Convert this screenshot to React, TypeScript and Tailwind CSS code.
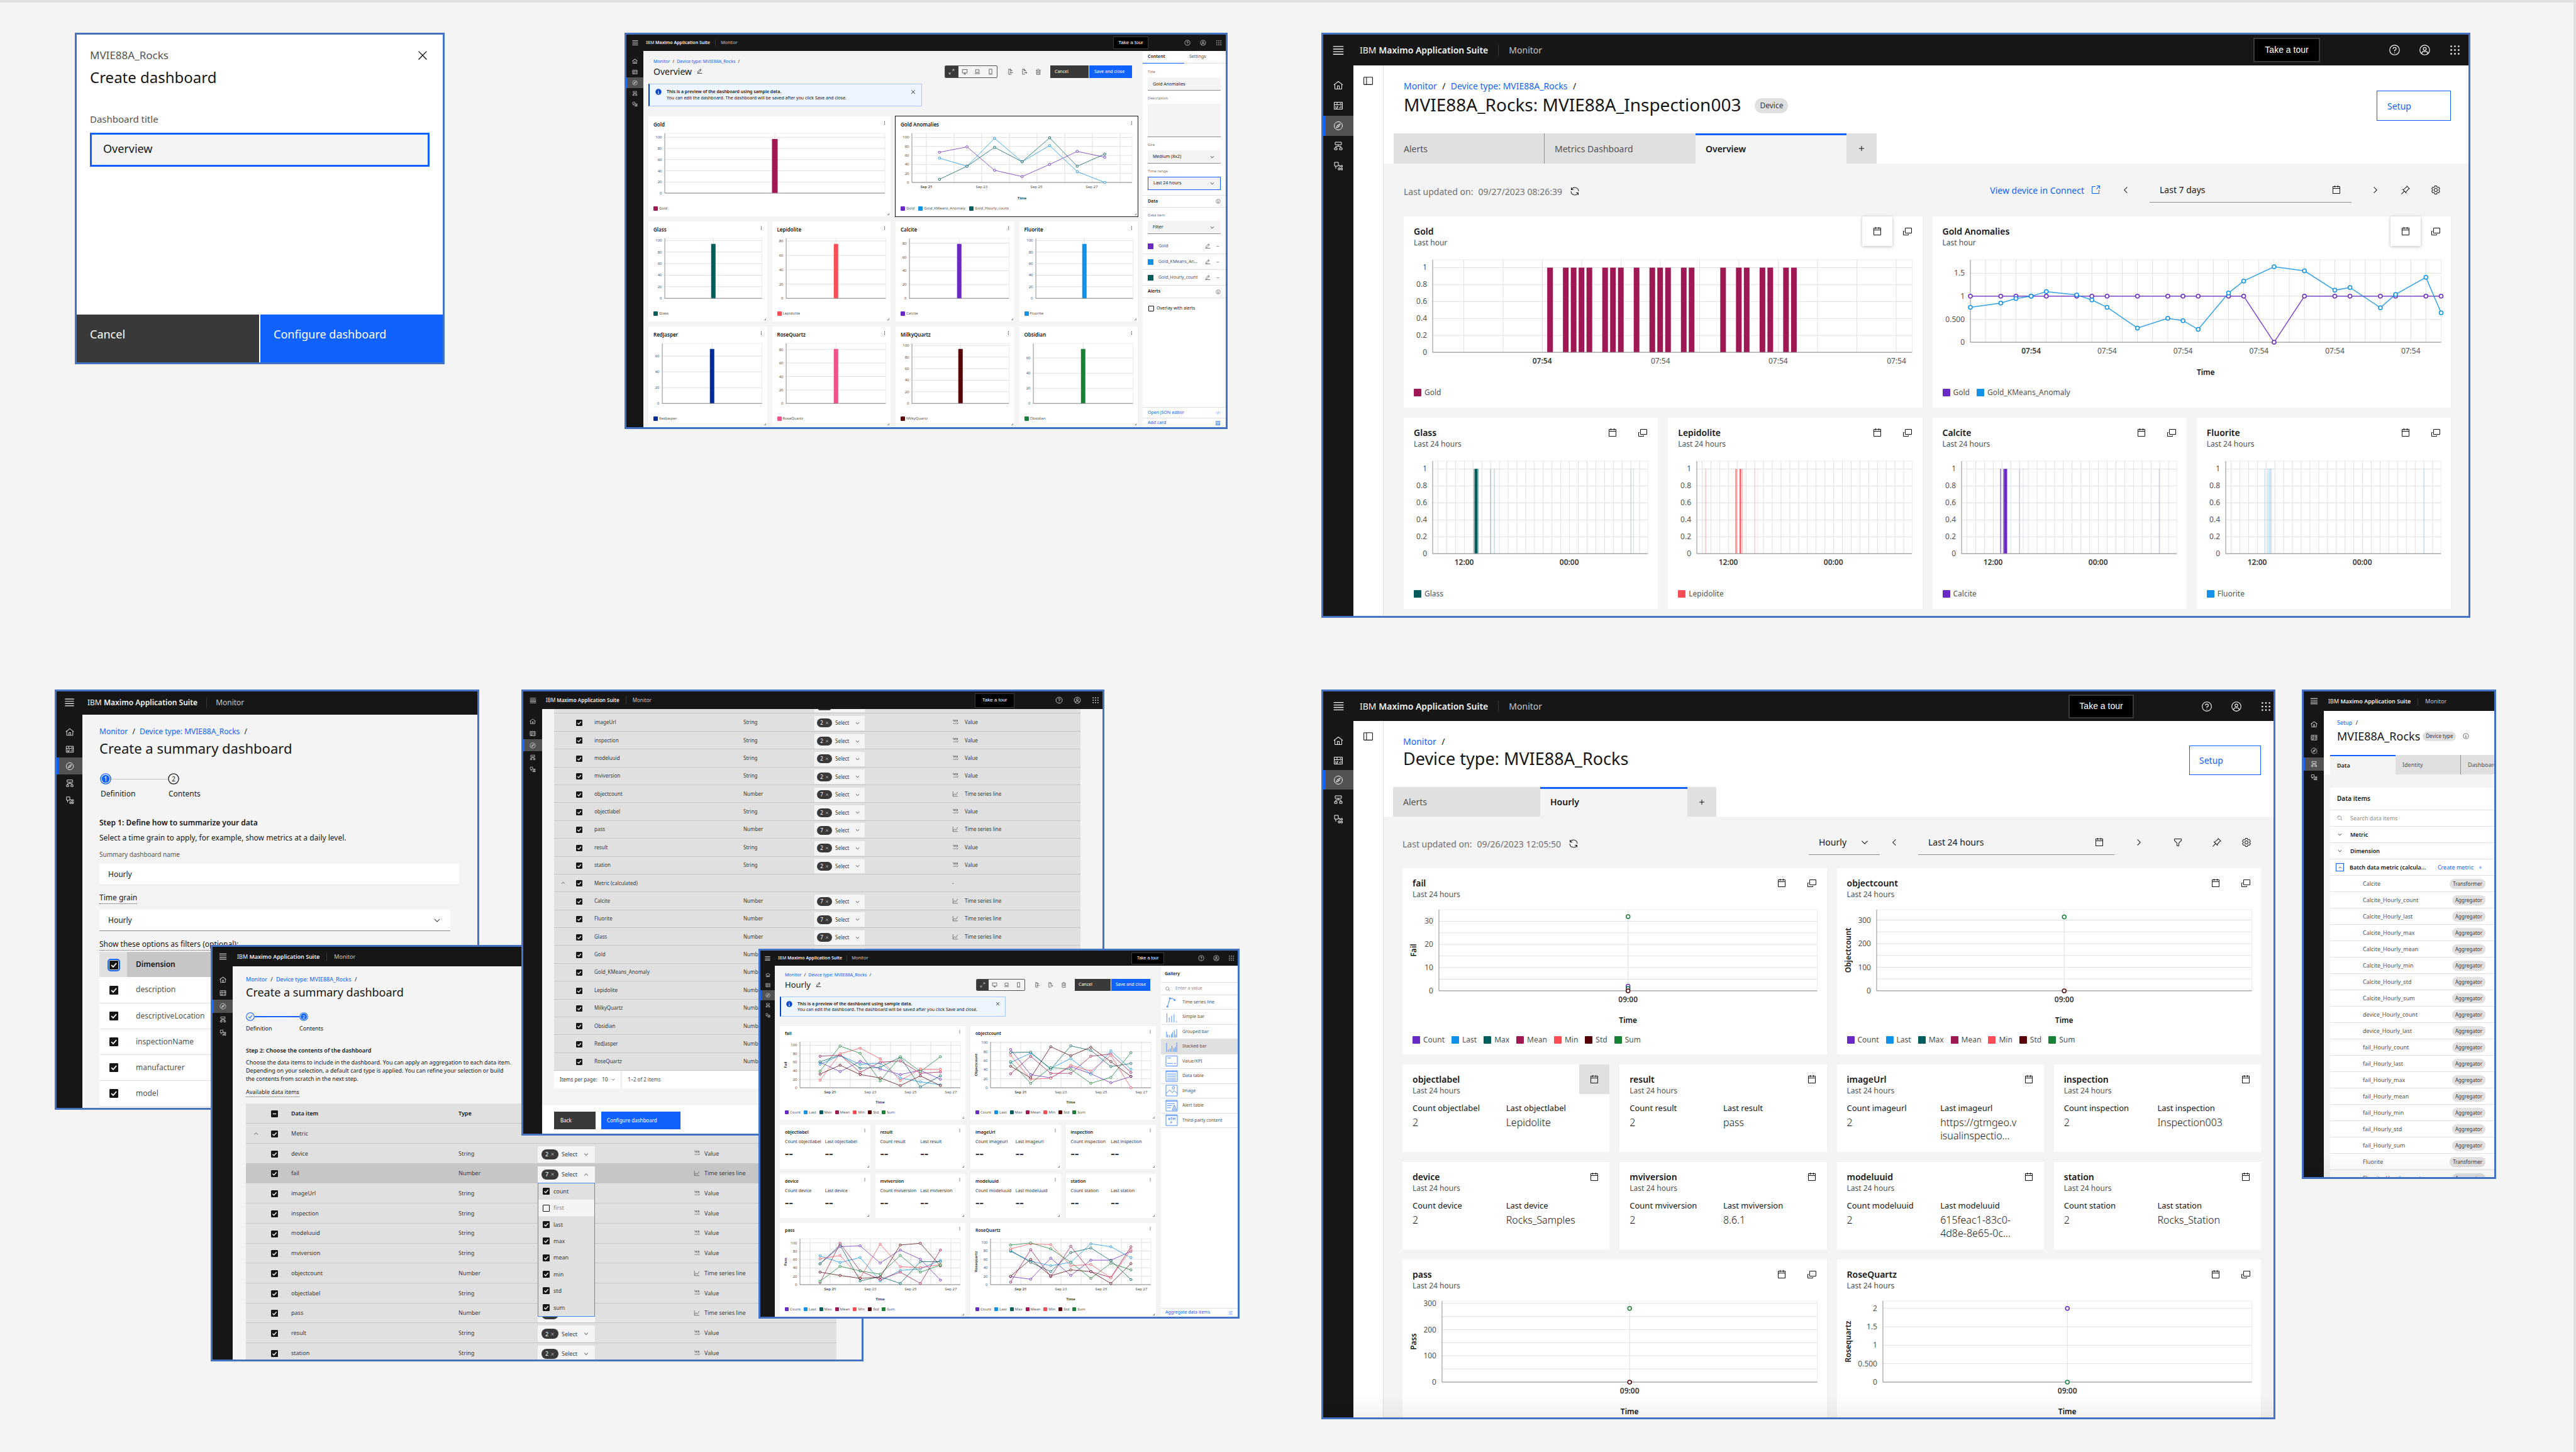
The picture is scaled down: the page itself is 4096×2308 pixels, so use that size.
import React from "react";

/* ------------------------------------------------------------------ */
/* Icons                                                               */
/* ------------------------------------------------------------------ */

const PATHS = {
  menu: "M4 6H28V8H4zM4 24H28V26H4zM4 12H28V14H4zM4 18H28V20H4z",
  home: "M16.61 2.21a1.01 1.01 0 0 0-1.24 0L1 13.42l1.24 1.57L4 13.62V26a2 2 0 0 0 2 2H26a2 2 0 0 0 2-2V13.63L29.76 15 31 13.43ZM18 26H14V18h4Zm2 0V18a2 2 0 0 0-2-2H14a2 2 0 0 0-2 2v8H6V12.06l10-7.79 10 7.8V26Z",
  calendar:
    "M26,4h-4V2h-2v2h-8V2h-2v2H6C4.9,4,4,4.9,4,6v20c0,1.1,0.9,2,2,2h20c1.1,0,2-0.9,2-2V6C28,4.9,27.1,4,26,4z M26,26H6V12h20V26z M26,10H6V6h4v2h2V6h8v2h2V6h4V10z",
  popup:
    "M28,4H10A2,2,0,0,0,8,6V20a2,2,0,0,0,2,2H28a2,2,0,0,0,2-2V6A2,2,0,0,0,28,4Zm0,16H10V6H28ZM18,26H4V16H6V14H4a2,2,0,0,0-2,2V26a2,2,0,0,0,2,2H18a2,2,0,0,0,2-2V24H18Z",
  close:
    "M17.41 16L26 7.41 24.59 6 16 14.59 7.41 6 6 7.41 14.59 16 6 24.59 7.41 26 16 17.41 24.59 26 26 24.59z",
  down: "M16 22L6 12 7.4 10.6 16 19.2 24.6 10.6 26 12z",
  up: "M16 10L26 20 24.6 21.4 16 12.8 7.4 21.4 6 20z",
  right: "M22 16L12 26 10.6 24.6 19.2 16 10.6 7.4 12 6z",
  left: "M10 16L20 6 21.4 7.4 12.8 16 21.4 24.6 20 26z",
  add: "M17 15V8H15V15H8V17H15V24H17V17H24V15z",
  minus: "M8 15H24V17H8z",
  switcher:
    "M14 4h4v4h-4zM4 4h4v4H4zM24 4h4v4h-4zM14 14h4v4h-4zM4 14h4v4H4zM24 14h4v4h-4zM14 24h4v4h-4zM4 24h4v4H4zM24 24h4v4h-4z",
  renew:
    "M12 10H6.78A11 11 0 0127 16h2A13 13 0 006 7.68V4H4v8h8zM20 22h5.22A11 11 0 015 16H3a13 13 0 0023 8.32V28h2V20H20z",
  launch:
    "M26,28H6a2,2,0,0,1-2-2V6A2,2,0,0,1,6,4H16V6H6V26H26V16h2V26A2,2,0,0,1,26,28ZM20 2V4H26.59L18 12.59 19.41 14 28 5.41V12H30V2z",
  pin: "M28.59,13.31,30,11.9,20,2,18.69,3.42l1.18,1.18L8.38,14.32,6.66,12.61,5.25,14l5.66,5.68L2,28.58,3.41,30l8.91-8.91L18,26.75l1.39-1.41L17.68,23.62l9.72-11.49ZM16.26,22.2,9.8,15.74,21.29,6.02,25.98,10.71Z",
  settings:
    "M27,16.76c0-.25,0-.5,0-.76s0-.51,0-.77l1.92-1.68A2,2,0,0,0,29.3,11L26.94,7a2,2,0,0,0-1.73-1,2,2,0,0,0-.64.1l-2.43.82a11.35,11.35,0,0,0-1.31-.75l-.51-2.52a2,2,0,0,0-2-1.61H13.64a2,2,0,0,0-2,1.61l-.51,2.52a11.48,11.48,0,0,0-1.32.75L7.43,6.06A2,2,0,0,0,6.79,6,2,2,0,0,0,5.06,7L2.7,11a2,2,0,0,0,.41,2.51L5,15.24c0,.25,0,.5,0,.76s0,.51,0,.77L3.11,18.45A2,2,0,0,0,2.7,21L5.06,25a2,2,0,0,0,1.73,1,2,2,0,0,0,.64-.1l2.43-.82a11.35,11.35,0,0,0,1.31.75l.51,2.52a2,2,0,0,0,2,1.61h4.72a2,2,0,0,0,2-1.61l.51-2.52a11.48,11.48,0,0,0,1.32-.75l2.42.82a2,2,0,0,0,.64.1,2,2,0,0,0,1.73-1L29.3,21a2,2,0,0,0-.41-2.51ZM25.21,24l-3.43-1.16a8.86,8.86,0,0,1-2.71,1.57L18.36,28H13.64l-.71-3.55a9.36,9.36,0,0,1-2.7-1.57L6.79,24,4.43,20l2.72-2.4a8.9,8.9,0,0,1,0-3.13L4.43,12,6.79,8l3.43,1.16a8.86,8.86,0,0,1,2.71-1.57L13.64,4h4.72l.71,3.55a9.36,9.36,0,0,1,2.7,1.57L25.21,8,27.57,12l-2.72,2.4a8.9,8.9,0,0,1,0,3.13L27.57,20ZM16,22a6,6,0,1,1,6-6A5.94,5.94,0,0,1,16,22Zm0-10a3.91,3.91,0,0,0-4,4,3.91,3.91,0,0,0,4,4,3.91,3.91,0,0,0,4-4A3.91,3.91,0,0,0,16,12Z",
  filter:
    "M18,28H14a2,2,0,0,1-2-2V18.41L4.59,11A2,2,0,0,1,4,9.59V6A2,2,0,0,1,6,4H26a2,2,0,0,1,2,2V9.59A2,2,0,0,1,27.41,11L20,18.41V26A2,2,0,0,1,18,28ZM6,6V9.59l8,8V26h4V17.59l8-8V6Z",
  edit: "M2 26H30V28H2zM25.4 9c.8-.8.8-2 0-2.8l-3.6-3.6c-.8-.8-2-.8-2.8 0l-15 15V24h6.4L25.4 9zM20.4 4L24 7.6l-3 3L17.4 7 20.4 4zM6 22v-3.6l10-10 3.6 3.6-10 10H6z",
  trash:
    "M12 12H14V24H12zM18 12H20V24H18zM4 6V8H6V28a2 2 0 002 2H24a2 2 0 002-2V8h2V6zM8 28V8H24V28zM12 2H20V4H12z",
  search:
    "M29,27.59l-7.55-7.55a11.02,11.02,0,1,0-1.41,1.41L27.59,29ZM4,13a9,9,0,1,1,9,9A9.01,9.01,0,0,1,4,13Z",
  sidebar: "M28,4H4A2,2,0,0,0,2,6V26a2,2,0,0,0,2,2H28a2,2,0,0,0,2-2V6A2,2,0,0,0,28,4ZM4,6H10V26H4ZM28,26H12V6H28Z",
  overflow: "M14 6h4v4h-4zM14 14h4v4h-4zM14 22h4v4h-4z",
  grid: "M4 4h6v6H4zM13 4h6v6h-6zM22 4h6v6h-6zM4 13h6v6H4zM13 13h6v6h-6zM22 13h6v6h-6zM4 22h6v6H4zM13 22h6v6h-6zM22 22h6v6h-6z",
};

const LINES = {
  help: "M3 16a13 13 0 1 0 26 0a13 13 0 1 0 -26 0M12 13a4 4 0 0 1 4-4h.5a3.5 3.5 0 0 1 0 7.5H16V19.5M16 22.2V24.6",
  user: "M3 16a13 13 0 1 0 26 0a13 13 0 1 0 -26 0M12 13a4 4 0 1 0 8 0a4 4 0 1 0 -8 0M8.5 26v-2a4 4 0 0 1 4-4h7a4 4 0 0 1 4 4v2",
  compass: "M3 16a13 13 0 1 0 26 0a13 13 0 1 0 -26 0M22.5 9.5L13.5 14L9.5 22.5L18.5 18ZM14 14L18 18",
  dashboard: "M3 5H29V27H3ZM3 13H29M12 5V13M21 9H26M8 17V24M8 24L13 24V18H16M20 24V20M24.5 24V16",
  flow: "M6 4H26V12H6ZM16 12V17M8 22V17H24V22M4 22H12V28H4ZM20 22H28V28H20Z",
  shapes: "M4 4H16V16H4ZM8 16V24M16 22H21V28H16ZM24 14H29V19H24ZM24 23H29V28H24ZM16 14H21V19",
  maximize: "M20 4H28V12M28 4L19 13M12 28H4V20M4 28L13 19",
  screen: "M4 5H28V22H4ZM16 22V28M10 28H22",
  laptop: "M7 6H25V20H7ZM3 26H29",
  mobile: "M9 3H23V29H9ZM14 25H18",
  import: "M22 12V10L15 3H6V29H20M14 3V11H22M28 20H14M18 15L13 20L18 25",
  export: "M22 12V10L15 3H6V29H18M14 3V11H22M14 21H28M23 16L28 21L23 26",
  info: "M3 16a13 13 0 1 0 26 0a13 13 0 1 0 -26 0M13 22H19M16 22V14H13.5M16 8.5V11",
  line: "M4 3V28H29M5 24L12 15L19 21L28 6",
  value: "M4 4H7V12M12 5H17V8H12V12H17M21 5H27V12H21M22 8.5H27M5 24C9 16 11 28 16 23S22 18 22 18M22 24H27L30 18",
  code: "M9 10L3 16L9 22M23 10L29 16L23 22M19 7L13 25",
  tune: "M4 7H14M20 7H28M4 16H20M4 25H12M18 25H28M17 4V10M23 13V19M15 22V28",
};

type IconName = keyof typeof PATHS | keyof typeof LINES;

function Icon({ name, className }: { name: IconName; className: string }) {
  const isLine = name in LINES;
  return (
    <svg viewBox="0 0 32 32" aria-hidden="true" className={`shrink-0 ${className}`}>
      {isLine ? (
        <path d={LINES[name as keyof typeof LINES]} fill="none" stroke="currentColor" strokeWidth="2" />
      ) : (
        <path d={PATHS[name as keyof typeof PATHS]} fill="currentColor" fillRule="evenodd" />
      )}
    </svg>
  );
}

/* ------------------------------------------------------------------ */
/* Colours                                                             */
/* ------------------------------------------------------------------ */

const C = {
  purple: "#6929c4",
  blue: "#1192e8",
  teal: "#005d5d",
  magenta: "#9f1853",
  red: "#fa4d56",
  maroon: "#570408",
  green: "#198038",
  navy: "#002d9c",
  pink: "#ee538b",
};

const AGG: [string, string][] = [
  ["Count", C.purple],
  ["Last", C.blue],
  ["Max", C.teal],
  ["Mean", C.magenta],
  ["Min", C.red],
  ["Std", C.maroon],
  ["Sum", C.green],
];

/* ------------------------------------------------------------------ */
/* Charts                                                              */
/* ------------------------------------------------------------------ */

interface ChartProps {
  w: number;
  h: number;
  plot: [number, number, number, number];
  max: number;
  ticks: number[];
  labelled?: (v: number) => string | null;
  vlines?: number[];
  xLabels?: [number, string, boolean][];
  xLabelY?: number;
  titleY?: number;
  yTitle?: string;
  font: number;
  stroke?: number;
  r?: number;
  series?: { color: string; pts: [number, number][] }[];
  bars?: { x: number; w: number; v: number; color: string; opacity?: number }[];
}

function Chart(p: ChartProps) {
  const [x0, y0, x1, y1] = p.plot;
  const y = (v: number) => y1 - (v / p.max) * (y1 - y0);
  const label = p.labelled ?? ((v: number) => String(v));
  const mid = (y0 + y1) / 2;
  return (
    <svg viewBox={`0 0 ${p.w} ${p.h}`} className="block w-full font-['Noto_Sans',sans-serif]" role="img">
      <g stroke="#e0e0e0" strokeWidth="1" fill="none">
        <path d={`M${x0} ${y0}H${x1}V${y1}`} stroke="#ececec" />
        {p.ticks.map((t) => (
          <line key={t} x1={x0} x2={x1} y1={y(t)} y2={y(t)} />
        ))}
        {(p.vlines ?? []).map((v) => (
          <line key={v} x1={v} x2={v} y1={y0} y2={y1} />
        ))}
      </g>
      {(p.bars ?? []).map((b, i) => (
        <rect key={i} x={b.x - b.w / 2} y={y(b.v)} width={b.w} height={y1 - y(b.v)} fill={b.color} opacity={b.opacity ?? 1} />
      ))}
      <path d={`M${x0} ${y0}V${y1}H${x1}`} fill="none" stroke="#8d8d8d" strokeWidth="1" />
      {p.ticks.map((t) => {
        const text = label(t);
        return text === null ? null : (
          <text key={t} x={x0 - p.font * 0.75} y={y(t) + p.font * 0.34} textAnchor="end" fontSize={p.font} fill="#525252">
            {text}
          </text>
        );
      })}
      {(p.series ?? []).map((s, i) => (
        <g key={i}>
          <polyline
            points={s.pts.map(([x, v]) => `${x},${y(v)}`).join(" ")}
            fill="none"
            stroke={s.color}
            strokeOpacity="0.85"
            strokeWidth={p.stroke ?? 1}
          />
          {s.pts.map(([x, v], k) => (
            <circle key={k} cx={x} cy={y(v)} r={p.r ?? 2} fill="#fff" stroke={s.color} strokeWidth={p.stroke ?? 1} />
          ))}
        </g>
      ))}
      {(p.xLabels ?? []).map(([x, t, bold]) => (
        <text
          key={x}
          x={x}
          y={(p.xLabelY ?? 0) + p.font * 0.34}
          textAnchor="middle"
          fontSize={p.font}
          fontWeight={bold ? 600 : 400}
          fill={bold ? "#393939" : "#525252"}
        >
          {t}
        </text>
      ))}
      {p.titleY !== undefined && (
        <text x={(x0 + x1) / 2} y={p.titleY + p.font * 0.34} textAnchor="middle" fontSize={p.font} fontWeight="600" fill="#161616">
          Time
        </text>
      )}
      {p.yTitle && (
        <text
          x={p.font * 1.8}
          y={mid}
          transform={`rotate(-90 ${p.font * 1.8} ${mid})`}
          textAnchor="middle"
          fontSize={p.font}
          fontWeight="600"
          fill="#161616"
        >
          {p.yTitle}
        </text>
      )}
    </svg>
  );
}

const LEGEND = {
  lg: { row: "h-6 gap-[11px] px-4 text-[12px]", item: "gap-[5px]", box: "size-3" },
  md: { row: "h-5 gap-[6px] px-2 text-[6px]", item: "gap-[2px]", box: "size-[7px]" },
  sm: { row: "h-[15px] gap-[5px] px-2 text-[6px]", item: "gap-[2px]", box: "size-[6px]" },
};

function Legend({ items, size }: { items: [string, string][]; size: keyof typeof LEGEND }) {
  const s = LEGEND[size];
  return (
    <ul className={`flex items-center text-[#525252] ${s.row}`}>
      {items.map(([name, color]) => (
        <li key={name} className={`flex items-center leading-none ${s.item}`}>
          <span className={`rounded-[1px] ${s.box}`} style={{ backgroundColor: color }} />
          {name}
        </li>
      ))}
    </ul>
  );
}

/* ------------------------------------------------------------------ */
/* Application chrome                                                  */
/* ------------------------------------------------------------------ */

const CHROME = {
  full: {
    bar: "h-[49px] text-[14px]",
    menu: "w-12",
    menuIcon: "size-[22px]",
    brand: "pl-[10px]",
    rule: "mx-4 h-[18px]",
    tour: "mr-[109px] h-[39px] w-[106px] border-2 text-[14px]",
    tools: "gap-[29px] pr-3",
    tool: "size-[19px]",
    nav: "w-12 pt-4",
    item: "h-8 border-l-4 pr-1",
    itemIcon: "size-4",
  },
  wide: {
    bar: "h-[47px] text-[14px]",
    menu: "w-12",
    menuIcon: "size-[21px]",
    brand: "pl-[10px]",
    rule: "mx-4 h-[18px]",
    tour: "mr-[107px] h-[38px] w-[104px] border-2 text-[14px]",
    tools: "gap-[29px] pr-[3px]",
    tool: "size-[18px]",
    nav: "w-12 pt-4",
    item: "h-[31px] border-l-4 pr-1",
    itemIcon: "size-4",
  },
  large: {
    bar: "h-[37px] pb-[2px] text-[12px]",
    menu: "w-[41px]",
    menuIcon: "size-[19px]",
    brand: "pl-2",
    rule: "mx-[14px] h-[16px]",
    tour: "",
    tools: "",
    tool: "",
    nav: "w-[41px] pt-[14px]",
    item: "h-[27px] border-l-[3px] pr-[3px]",
    itemIcon: "size-[14px]",
  },
  medium: {
    bar: "h-[31px] text-[9px]",
    menu: "w-8",
    menuIcon: "size-[15px]",
    brand: "pl-[7px]",
    rule: "mx-[11px] h-3",
    tour: "",
    tools: "",
    tool: "",
    nav: "w-8 pt-[11px]",
    item: "h-[21px] border-l-2 pr-[2px]",
    itemIcon: "size-[11px]",
  },
  compact: {
    bar: "h-7 text-[8px]",
    menu: "w-[30px]",
    menuIcon: "size-[13px]",
    brand: "pl-[6px]",
    rule: "mx-[10px] h-3",
    tour: "mr-[65px] h-[23px] w-[63px] border text-[8px]",
    tools: "gap-[17px] pr-[5px]",
    tool: "size-[12px]",
    nav: "w-[30px] pt-[10px]",
    item: "h-[19px] border-l-2 pr-[2px]",
    itemIcon: "size-[10px]",
  },
  small: {
    bar: "h-[26px] text-[7px]",
    menu: "w-[27px]",
    menuIcon: "size-[12px]",
    brand: "pl-[4px]",
    rule: "mx-[8px] h-[10px]",
    tour: "mr-[57px] h-5 w-[56px] border text-[8px]",
    tools: "gap-[15px] pr-[6px]",
    tool: "size-[10px]",
    nav: "w-[27px] pt-2",
    item: "h-[17px] border-l-2 pr-[2px]",
    itemIcon: "size-[9px]",
  },
  tiny: {
    bar: "h-6 text-[7px]",
    menu: "w-[23px]",
    menuIcon: "size-[11px]",
    brand: "pl-[5px]",
    rule: "mx-[7px] h-[9px]",
    tour: "mr-[54px] h-[19px] w-[52px] border text-[7px]",
    tools: "gap-[14px] pr-[5px]",
    tool: "size-[10px]",
    nav: "w-[23px] pt-[7px]",
    item: "h-4 border-l-2 pr-[2px]",
    itemIcon: "size-[8px]",
  },
};

type ChromeSize = keyof typeof CHROME;

const NAV: [IconName, string][] = [
  ["home", "Home"],
  ["dashboard", "Dashboards"],
  ["compass", "Monitor"],
  ["flow", "Setup"],
  ["shapes", "Applications"],
];

function Shell({
  size,
  tools = true,
  active = 2,
  children,
}: {
  size: ChromeSize;
  tools?: boolean;
  active?: number;
  children: React.ReactNode;
}) {
  const s = CHROME[size];
  return (
    <div className="flex h-full flex-col bg-[#f4f4f4]">
      <header className={`flex shrink-0 items-center whitespace-nowrap bg-[#161616] text-[#f4f4f4] ${s.bar}`}>
        <button aria-label="Open menu" className={`flex shrink-0 justify-center ${s.menu}`}>
          <Icon name="menu" className={s.menuIcon} />
        </button>
        <span className={s.brand}>
          IBM <span className="font-semibold">Maximo Application Suite</span>
        </span>
        <span className={`w-px bg-[#393939] ${s.rule}`} />
        <span className="text-[#c6c6c6]">Monitor</span>
        {tools && (
          <>
            <button className={`ml-auto border-[#393939] bg-black text-white font-['Liberation_Sans',sans-serif] ${s.tour}`}>
              Take a tour
            </button>
            <div className={`flex items-center ${s.tools}`}>
              <button aria-label="Help"><Icon name="help" className={s.tool} /></button>
              <button aria-label="Account"><Icon name="user" className={s.tool} /></button>
              <button aria-label="Switch application"><Icon name="switcher" className={s.tool} /></button>
            </div>
          </>
        )}
      </header>
      <div className="flex min-h-0 flex-1">
        <nav aria-label="Main" className={`flex shrink-0 flex-col bg-[#161616] text-[#f4f4f4] ${s.nav}`}>
          {NAV.map(([icon, label], i) => (
            <a
              key={icon}
              href={`#${icon}`}
              aria-label={label}
              className={`flex items-center justify-center ${s.item} ${
                i === active ? "border-[#0f62fe] bg-[#525252]" : "border-transparent"
              }`}
            >
              <Icon name={icon} className={s.itemIcon} />
            </a>
          ))}
        </nav>
        {children}
      </div>
    </div>
  );
}

function Crumbs({ items, className }: { items: string[]; className: string }) {
  return (
    <nav aria-label="Breadcrumb" className={`flex items-center whitespace-nowrap text-[#161616] ${className}`}>
      {items.map((t) => (
        <React.Fragment key={t}>
          <a href="#crumb" className="text-[#0f62fe]">{t}</a>
          <span className="mx-[0.6em]">/</span>
        </React.Fragment>
      ))}
    </nav>
  );
}

function Tick({ className, label, checked = true, mixed = false }: { className: string; label: string; checked?: boolean; mixed?: boolean }) {
  return (
    <span className={`relative inline-block shrink-0 align-middle ${className}`}>
      <input
        type="checkbox"
        aria-label={label}
        defaultChecked={checked}
        className="block size-full appearance-none rounded-[1px] border border-[#161616] checked:bg-[#161616]"
      />
      {checked && (
        <svg viewBox="0 0 16 16" className="pointer-events-none absolute inset-0 size-full" aria-hidden="true">
          <path d={mixed ? "M4 8H12" : "M3.5 8.2L6.8 11.4L12.6 4.8"} fill="none" stroke="#fff" strokeWidth="2" />
        </svg>
      )}
    </span>
  );
}

/* ------------------------------------------------------------------ */
/* Create dashboard dialog                                             */
/* ------------------------------------------------------------------ */

function CreateDialog() {
  return (
    <form className="flex h-full flex-col bg-white">
      <div className="flex-1 px-[21px] pt-[21px]">
        <div className="flex items-center justify-between">
          <p className="text-[17px] leading-6 text-[#525252]">MVIE88A_Rocks</p>
          <button type="button" aria-label="Close">
            <Icon name="close" className="size-[22px]" />
          </button>
        </div>
        <h2 className="mt-[7px] text-[24px] leading-8 text-[#161616]">Create dashboard</h2>
        <label htmlFor="dash-title" className="mt-[38px] block text-[15px] leading-6 text-[#525252]">
          Dashboard title
        </label>
        <input
          id="dash-title"
          defaultValue="Overview"
          className="mt-[10px] block h-[54px] w-full border-[3px] border-[#0f62fe] bg-[#f4f4f4] px-[18px] pb-1 text-[18px] text-[#161616]"
        />
      </div>
      <div className="flex h-[76px] gap-[2px] text-[18px] text-white">
        <button type="button" className="flex flex-1 bg-[#393939] pl-[21px] pt-[19px] leading-6">Cancel</button>
        <button type="button" className="flex flex-1 bg-[#0f62fe] pl-[21px] pt-[19px] leading-6">Configure dashboard</button>
      </div>
    </form>
  );
}

/* ------------------------------------------------------------------ */
/* Dashboard editor (two sizes)                                        */
/* ------------------------------------------------------------------ */

const EDITOR = {
  md: {
    body: "px-2",
    head: "h-[52px] pl-2 pr-[9px]",
    crumbs: "mt-3 h-[10px] text-[7px]",
    title: "h-5 gap-2 text-[14px]",
    pen: "size-[9px]",
    tools: "mt-[23px] h-5 text-[7px]",
    seg: "w-[84px]",
    icons: "gap-3 pl-4 pr-[14px]",
    icon: "size-[10px]",
    cancel: "w-[61px] pl-[7px]",
    save: "ml-px w-[68px] pl-2",
    note: "h-[36px] w-[435px] gap-2 pl-[9px] pr-2 pt-[7px] text-[7px] leading-[10px]",
    noteIcon: "size-[10px]",
    noteClose: "size-[10px]",
    grid: "mt-4 gap-2",
    cardHead: "h-[22px] pl-2 pr-[5px] pt-[6px] text-[8px] leading-[14px]",
    dots: "size-[9px]",
  },
  sm: {
    body: "px-2",
    head: "h-[49px] pl-2 pr-[9px]",
    crumbs: "mt-[10px] h-[11px] text-[7px]",
    title: "h-[19px] gap-2 text-[13px]",
    pen: "size-[9px]",
    tools: "mt-[21px] h-[19px] text-[7px]",
    seg: "w-[78px]",
    icons: "gap-3 pl-[15px] pr-[13px]",
    icon: "size-[9px]",
    cancel: "w-[57px] pl-[6px]",
    save: "ml-px w-[62px] pl-[7px]",
    note: "h-8 w-[359px] gap-2 pl-2 pr-[7px] pt-[6px] text-[7px] leading-[9px]",
    noteIcon: "size-[10px]",
    noteClose: "size-[9px]",
    grid: "mt-[15px] gap-2",
    cardHead: "h-5 pl-2 pr-[5px] pt-[5px] text-[7px] leading-[14px]",
    dots: "size-[8px]",
  },
};

type EditorSize = keyof typeof EDITOR;

function EditorHead({ size, title }: { size: EditorSize; title: string }) {
  const s = EDITOR[size];
  return (
    <>
      <div className={`flex justify-between ${s.head}`}>
        <div>
          <Crumbs items={["Monitor", "Device type: MVIE88A_Rocks"]} className={s.crumbs} />
          <h2 className={`flex items-center text-[#161616] ${s.title}`}>
            {title}
            <button aria-label="Rename"><Icon name="edit" className={s.pen} /></button>
          </h2>
        </div>
        <div className={`flex items-center ${s.tools}`}>
          <div className={`grid h-full grid-cols-4 overflow-hidden rounded-[2px] border border-[#525252] ${s.seg}`}>
            {(["maximize", "screen", "laptop", "mobile"] as IconName[]).map((n, i) => (
              <button
                key={n}
                aria-label={n}
                className={`flex items-center justify-center ${i === 0 ? "bg-[#393939] text-white" : "text-[#161616]"}`}
              >
                <Icon name={n} className={s.icon} />
              </button>
            ))}
          </div>
          <div className={`flex items-center ${s.icons}`}>
            {(["import", "export", "trash"] as IconName[]).map((n) => (
              <button key={n} aria-label={n}><Icon name={n} className={s.icon} /></button>
            ))}
          </div>
          <button className={`h-full bg-[#393939] text-left text-white ${s.cancel}`}>Cancel</button>
          <button className={`h-full whitespace-nowrap bg-[#0f62fe] text-left text-white ${s.save}`}>Save and close</button>
        </div>
      </div>
      <div className={`flex items-start border border-l-2 border-[#a6c8ff] border-l-[#0043ce] bg-[#edf5ff] text-[#161616] ${s.note}`}>
        <svg viewBox="0 0 16 16" className={`shrink-0 ${s.noteIcon}`} aria-hidden="true">
          <circle cx="8" cy="8" r="7.5" fill="#0043ce" />
          <path d="M6 12H10M8 12V7H6.5M8 3.6V5.2" fill="none" stroke="#fff" strokeWidth="1.4" />
        </svg>
        <div className="flex-1 whitespace-nowrap">
          <p className="font-semibold">This is a preview of the dashboard using sample data.</p>
          <p>You can edit the dashboard. The dashboard will be saved after you click Save and close.</p>
        </div>
        <button aria-label="Dismiss"><Icon name="close" className={s.noteClose} /></button>
      </div>
    </>
  );
}

function EditorCard({
  size,
  title,
  className,
  children,
}: {
  size: EditorSize;
  title: string;
  className: string;
  children: React.ReactNode;
}) {
  const s = EDITOR[size];
  return (
    <section className={`relative bg-white ${className}`}>
      <div className={`flex justify-between font-semibold text-[#161616] ${s.cardHead}`}>
        <h3>{title}</h3>
        <button aria-label={`${title} options`} className="self-start"><Icon name="overflow" className={s.dots} /></button>
      </div>
      {children}
      <span className="absolute bottom-[2px] right-[2px] size-[3px] border-b border-r border-[#8d8d8d]" />
    </section>
  );
}

const EDITOR_BARS: [string, string, number, number, number][] = [
  ["Glass", C.teal, 94, 26, 100],
  ["Lepidolite", C.red, 76, 22, 80],
  ["Calcite", C.purple, 79, 22, 80],
  ["Fluorite", C.blue, 94, 26, 100],
  ["RedJasper", C.navy, 69, 22, 60],
  ["RoseQuartz", C.pink, 81, 22, 80],
  ["MilkyQuartz", C.maroon, 94, 26, 100],
  ["Obsidian", C.green, 72, 22, 60],
];

const steps = (from: number, to: number, by: number) => {
  const out: number[] = [];
  for (let v = from; v <= to + by / 1000; v += by) out.push(v);
  return out;
};

const week = (x0: number, step: number, values: number[]): [number, number][] =>
  values.map((v, i) => [x0 + step * (i + 1), v]);

function PanelSelect({ id, label, value, focus = false }: { id: string; label: string; value: string; focus?: boolean }) {
  return (
    <div className="mt-[7px]">
      <label htmlFor={id} className="block h-[10px] text-[6px] leading-[10px] text-[#6f6f6f]">{label}</label>
      <div className="relative mt-[4px]">
        <select
          id={id}
          className={`block h-[21px] w-full appearance-none bg-[#f4f4f4] px-2 text-[7px] text-[#161616] ${
            focus ? "border border-[#0f62fe]" : "border-b border-[#8d8d8d]"
          }`}
        >
          <option>{value}</option>
        </select>
        <Icon name="down" className="pointer-events-none absolute right-[9px] top-[6px] size-[9px]" />
      </div>
    </div>
  );
}

function OverviewEditor() {
  return (
    <Shell size="small">
      <main className={`min-w-0 flex-1 ${EDITOR.md.body}`}>
        <EditorHead size="md" title="Overview" />
        <div className={`grid grid-cols-4 ${EDITOR.md.grid}`}>
          <EditorCard size="md" title="Gold" className="col-span-2 h-[159px]">
            <Chart
              w={385}
              h={114}
              plot={[26, 5, 376, 100]}
              max={107}
              ticks={steps(0, 100, 20)}
              vlines={[201]}
              bars={[{ x: 201, w: 9, v: 97, color: C.magenta }]}
              font={6}
            />
            <Legend size="md" items={[["Gold", C.magenta]]} />
          </EditorCard>
          <EditorCard size="md" title="Gold Anomalies" className="col-span-2 h-[159px] outline outline-1 outline-[#161616]">
            <Chart
              w={385}
              h={114}
              plot={[26, 5, 376, 83]}
              max={109}
              ticks={steps(0, 100, 20)}
              vlines={steps(49, 376, 44)}
              xLabels={[[49, "Sep 21", true], [137, "Sep 23", false], [224, "Sep 25", false], [312, "Sep 27", false]]}
              xLabelY={90}
              titleY={108}
              font={6}
              stroke={0.9}
              r={1.8}
              series={[
                { color: C.purple, pts: week(26, 43.8, [67, 79, 27, 13, 40, 69, 56]) },
                { color: C.blue, pts: week(26, 43.8, [54, 36, 98, 46, 82, 24, 0]) },
                { color: C.teal, pts: week(26, 43.8, [7, 36, 78, 46, 99, 36, 63]) },
              ]}
            />
            <Legend size="md" items={[["Gold", C.purple], ["Gold_KMeans_Anomaly", C.blue], ["Gold_Hourly_count", C.teal]]} />
          </EditorCard>
          {EDITOR_BARS.map(([name, color, v, x0, top]) => (
            <EditorCard key={name} size="md" title={name} className="h-[159px]">
              <Chart
                w={188}
                h={114}
                plot={[x0, 5, 180, 100]}
                max={v * 1.1}
                ticks={steps(0, top, 20)}
                vlines={[(x0 + 180) / 2]}
                bars={[{ x: (x0 + 180) / 2, w: 7, v, color }]}
                font={6}
              />
              <Legend size="md" items={[[name, color]]} />
            </EditorCard>
          ))}
        </div>
      </main>
      <aside className="flex w-[132px] shrink-0 flex-col bg-white text-[7px] text-[#161616]">
        <div role="tablist" className="grid h-5 grid-cols-2">
          <button role="tab" aria-selected="true" className="border-b border-[#0f62fe] pl-2 text-left font-semibold">Content</button>
          <button role="tab" aria-selected="false" className="border-b border-[#e0e0e0] pl-2 text-left text-[#525252]">Settings</button>
        </div>
        <div className="px-2">
          <label htmlFor="card-title" className="mt-2 block h-[10px] text-[6px] leading-[10px] text-[#6f6f6f]">Title</label>
          <input id="card-title" defaultValue="Gold Anomalies" className="mt-[4px] block h-[21px] w-full border-b border-[#8d8d8d] bg-[#f4f4f4] px-2" />
          <label htmlFor="card-desc" className="mt-[7px] block h-[10px] text-[6px] leading-[10px] text-[#6f6f6f]">Description</label>
          <textarea id="card-desc" className="mt-[4px] block h-[53px] w-full resize-none border-b border-[#8d8d8d] bg-[#f4f4f4]" />
          <PanelSelect id="card-size" label="Size" value="Medium (8x2)" />
          <PanelSelect id="card-range" label="Time range" value="Last 24 hours" focus />
        </div>
        <div className="mt-2 flex h-5 items-center justify-between border-y border-[#e0e0e0] px-2 font-semibold">
          Data <Icon name="info" className="size-[8px]" />
        </div>
        <div className="px-2"><PanelSelect id="card-item" label="Data item" value="Filter" /></div>
        <ul className="mt-[7px]">
          {[["Gold", C.purple], ["Gold_KMeans_An...", C.blue], ["Gold_Hourly_count", C.teal]].map(([name, color]) => (
            <li key={name} className="flex h-[25px] items-center border-b border-[#e0e0e0] px-2 text-[#525252]">
              <span className="mr-2 size-[9px]" style={{ backgroundColor: color }} />
              <span className="flex-1">{name}</span>
              <button aria-label={`Edit ${name}`}><Icon name="edit" className="size-[9px]" /></button>
              <button aria-label={`Remove ${name}`} className="ml-[7px]"><Icon name="minus" className="size-[9px]" /></button>
            </li>
          ))}
        </ul>
        <div className="flex h-5 items-center justify-between border-b border-[#e0e0e0] px-2 font-semibold">
          Alerts <Icon name="info" className="size-[8px]" />
        </div>
        <label className="mt-2 flex h-4 items-center gap-[4px] px-[9px]">
          <input type="checkbox" className="size-[9px] appearance-none rounded-[1px] border border-[#161616]" />
          Overlay with alerts
        </label>
        <button className="mt-auto flex h-[17px] items-center justify-between border-t border-[#e0e0e0] px-2 text-[#0f62fe]">
          Open JSON editor <Icon name="code" className="size-[8px]" />
        </button>
        <button className="flex h-[15px] items-center justify-between border-t border-[#e0e0e0] px-2 text-[#0f62fe]">
          Add card <Icon name="grid" className="size-[9px]" />
        </button>
      </aside>
    </Shell>
  );
}

const HOURLY: { name: string; y: string; max: number; data: number[][] }[] = [
  {
    name: "fail",
    y: "Fail",
    max: 108,
    data: [
      [60, 38, 62, 44, 31, 41, 20],
      [55, 76, 55, 58, 23, 14, 7],
      [61, 77, 46, 48, 72, 2, 28],
      [74, 77, 36, 60, 63, 34, 37],
      [18, 80, 93, 68, 17, 44, 43],
      [32, 53, 31, 23, 5, 28, 5],
      [39, 98, 81, 16, 73, 38, 73],
    ],
  },
  {
    name: "objectcount",
    y: "Objectcount",
    max: 102,
    data: [
      [85, 29, 22, 47, 31, 11, 25],
      [56, 77, 43, 65, 30, 82, 41],
      [78, 79, 41, 93, 83, 47, 54],
      [31, 70, 32, 32, 70, 75, 34],
      [72, 19, 21, 50, 37, 72, 0],
      [48, 22, 91, 71, 90, 58, 25],
      [58, 10, 45, 41, 10, 23, 78],
    ],
  },
  {
    name: "pass",
    y: "Pass",
    max: 110,
    data: [
      [50, 91, 93, 52, 83, 61, 11],
      [69, 53, 65, 9, 34, 38, 58],
      [50, 95, 9, 19, 3, 55, 55],
      [5, 99, 33, 12, 30, 3, 83],
      [62, 70, 16, 97, 43, 41, 48],
      [30, 22, 15, 18, 95, 99, 45],
      [8, 44, 33, 25, 70, 30, 47],
    ],
  },
  {
    name: "RoseQuartz",
    y: "Rosequartz",
    max: 109,
    data: [
      [19, 13, 63, 22, 58, 58, 79],
      [79, 56, 45, 53, 97, 90, 64],
      [81, 53, 31, 76, 87, 57, 12],
      [6, 83, 19, 91, 31, 17, 90],
      [85, 97, 95, 45, 48, 16, 83],
      [20, 60, 21, 35, 31, 3, 50],
      [94, 99, 85, 53, 15, 51, 35],
    ],
  },
];

function HourlyEditorChart({ index }: { index: number }) {
  const d = HOURLY[index];
  return (
    <EditorCard size="sm" title={d.name} className="col-span-2 h-[149px]">
      <Chart
        w={295}
        h={109}
        plot={[32, 5, 287, 78]}
        max={d.max}
        ticks={steps(0, 100, 20)}
        vlines={steps(48, 287, 32)}
        xLabels={[[80, "Sep 21", true], [144, "Sep 23", false], [208, "Sep 25", false], [272, "Sep 27", false]]}
        xLabelY={85}
        titleY={101}
        yTitle={d.y}
        font={6}
        stroke={0.9}
        r={1.7}
        series={d.data.map((row, i) => ({ color: AGG[i][1], pts: week(32, 31.9, row) }))}
      />
      <Legend size="sm" items={AGG} />
    </EditorCard>
  );
}

const GALLERY: [string, string][] = [
  ["Time series line", "M6 34L14 8L24 6L30 12M4 32h4v4h-4zM12 4h4v4h-4zM28 10h4v4h-4z"],
  ["Simple bar", "M4 38V8M12 38V22M20 38V16M28 38V12M36 38V34"],
  ["Grouped bar", "M3 38V18M7 38V28M13 38V30M19 38V26M23 38V20M29 38V14M33 38V28M37 38V10"],
  ["Stacked bar", "M3 38V8M9 38V30M15 38V26M21 38V18M27 38V26M32 38V22M37 38V6"],
  ["Value/KPI", "M1 3H39V37H1ZM6 10H18M6 28H24M28 28H34"],
  ["Data table", "M1 2H39V38H1ZM1 5H39M5 13H35M5 20H35M5 27H35M5 33H35"],
  ["Image", "M1 2H39V38H1ZM1 30L13 18L22 27L29 20L39 30M22 11a4 4 0 1 0 8 0a4 4 0 1 0 -8 0"],
  ["Alert table", "M1 2H39V38H1ZM1 5H39M5 13H30M5 20H20M5 27H18M22 34L29 18L36 34ZM26 30H32M28 26H30"],
  ["Third-party content", "M1 2H39V38H1ZM1 5H39M10 12V20M14 12V20M10 16H14M17 12H22M20 12V20M25 20V12L28 16L31 12V20M14 32L20 26M16 26H20V30"],
];

const SUMMARY_VALUES = ["objectlabel", "result", "imageUrl", "inspection", "device", "mviversion", "modeluuid", "station"];

function HourlyEditor() {
  return (
    <Shell size="tiny">
      <main className={`min-w-0 flex-1 ${EDITOR.sm.body}`}>
        <EditorHead size="sm" title="Hourly" />
        <div className={`grid grid-cols-4 ${EDITOR.sm.grid}`}>
          <HourlyEditorChart index={0} />
          <HourlyEditorChart index={1} />
          {SUMMARY_VALUES.map((name) => (
            <EditorCard key={name} size="sm" title={name} className="h-[70px]">
              <dl className="grid grid-cols-2 whitespace-nowrap px-2 pt-[2px] text-[7px] leading-[10px] text-[#393939]">
                {["Count", "Last"].map((k) => (
                  <div key={k}>
                    <dt>{`${k} ${name.toLowerCase()}`}</dt>
                    <dd className="mt-[6px] text-[20px] font-semibold leading-[14px]">--</dd>
                  </div>
                ))}
              </dl>
            </EditorCard>
          ))}
          <HourlyEditorChart index={2} />
          <HourlyEditorChart index={3} />
        </div>
      </main>
      <aside className="flex w-[122px] shrink-0 flex-col bg-white text-[7px] text-[#525252]">
        <h3 className="flex h-[27px] items-center border-b border-[#e0e0e0] pl-[6px] font-semibold text-[#161616]">Gallery</h3>
        <label className="flex h-[20px] items-center gap-2 border-b border-[#e0e0e0] pl-[7px]">
          <Icon name="search" className="size-[8px]" />
          <input aria-label="Search gallery" placeholder="Enter a value" className="w-full placeholder:text-[#8d8d8d]" />
        </label>
        <ul className="grid h-[211px] auto-rows-fr">
          {GALLERY.map(([name, d]) => (
            <li
              key={name}
              className={`flex items-center gap-[7px] border-b border-[#e0e0e0] pl-[7px] ${
                name === "Stacked bar" ? "bg-[#e0e0e0]" : ""
              }`}
            >
              <svg viewBox="0 0 40 40" className="h-[19px] w-5" aria-hidden="true">
                <path d={d} fill="none" stroke="#4589ff" strokeWidth="2" />
              </svg>
              {name}
            </li>
          ))}
        </ul>
        <button className="mt-auto flex h-[14px] items-center justify-between border-t border-[#e0e0e0] px-[7px] text-[#0f62fe]">
          Aggregate data items <Icon name="tune" className="size-[8px]" />
        </button>
      </aside>
    </Shell>
  );
}

/* ------------------------------------------------------------------ */
/* Live dashboards                                                     */
/* ------------------------------------------------------------------ */

const LIVE = {
  a: {
    head: "h-[156px]",
    crumbs: "ml-8 mt-[22px] h-5 text-[14px]",
    title: "ml-8 h-[40px] text-[28px]",
    setup: "mr-[28px] mt-10 h-12 w-[118px] border pl-4 text-[14px]",
    tabs: "ml-4 mt-[26px] h-12 text-[14px]",
    tab: "w-[240px]",
    add: "w-12",
    tools: "h-[84px] pl-8 pr-[28px] text-[14px]",
    grid: "pl-8 pr-[28px]",
  },
  b: {
    head: "h-[152px]",
    crumbs: "ml-[31px] mt-[22px] h-5 text-[14px]",
    title: "ml-[31px] h-[36px] text-[27px]",
    setup: "mr-5 mt-[39px] h-[47px] w-[114px] border pl-[15px] text-[14px]",
    tabs: "ml-[15px] mt-[27px] h-[47px] text-[14px]",
    tab: "w-[234px]",
    add: "w-[46px]",
    tools: "h-[82px] pl-[30px] pr-5 text-[14px]",
    grid: "pl-[30px] pr-5",
  },
};

function LiveScreen({
  kind,
  crumbs,
  title,
  tag,
  tabs,
  updated,
  tools,
  children,
}: {
  kind: keyof typeof LIVE;
  crumbs: string[];
  title: string;
  tag?: string;
  tabs: string[];
  updated: string;
  tools: React.ReactNode;
  children: React.ReactNode;
}) {
  const s = LIVE[kind];
  return (
    <Shell size={kind === "a" ? "full" : "wide"}>
      <div className="flex w-12 shrink-0 justify-center border-r border-[#e0e0e0] bg-white pt-4">
        <button aria-label="Open panel" className="self-start"><Icon name="sidebar" className="size-[17px]" /></button>
      </div>
      <main className="flex min-w-0 flex-1 flex-col">
        <div className={`flex shrink-0 justify-between bg-white ${s.head}`}>
          <div>
            <Crumbs items={crumbs} className={s.crumbs} />
            <h2 className={`flex items-center whitespace-nowrap text-[#161616] ${s.title}`}>
              {title}
              {tag && <span className="ml-[22px] mt-1 flex h-6 items-center rounded-full bg-[#e0e0e0] px-2 text-[12px] text-[#393939]">{tag}</span>}
            </h2>
            <div role="tablist" className={`flex text-[#525252] ${s.tabs}`}>
              {tabs.map((t, i) => {
                const on = i === tabs.length - 1;
                return (
                  <button
                    key={t}
                    role="tab"
                    aria-selected={on}
                    className={`px-4 text-left ${s.tab} ${
                      on ? "border-t-[3px] border-[#0f62fe] bg-[#f4f4f4] pb-[3px] font-semibold text-[#161616]" : "bg-[#e0e0e0]"
                    } ${!on && i < tabs.length - 2 ? "border-r border-[#8d8d8d]" : ""}`}
                  >
                    {t}
                  </button>
                );
              })}
              <button aria-label="Add dashboard" className={`flex items-center justify-center bg-[#e0e0e0] text-[#161616] ${s.add}`}>
                <Icon name="add" className="size-4" />
              </button>
            </div>
          </div>
          <button className={`border-[#0f62fe] text-left text-[#0f62fe] ${s.setup}`}>Setup</button>
        </div>
        <div className={`flex shrink-0 items-center ${s.tools}`}>
          <p className="flex items-center whitespace-nowrap pt-1 text-[#6f6f6f]">
            Last updated on:<span className="ml-2">{updated}</span>
            <button aria-label="Refresh" className="ml-3 text-[#161616]"><Icon name="renew" className="size-4" /></button>
          </p>
          <div className="ml-auto flex items-center text-[#161616]">{tools}</div>
        </div>
        <div className={`grid grid-cols-4 gap-4 ${s.grid}`}>{children}</div>
      </main>
    </Shell>
  );
}

function ToolButton({ name, label, className }: { name: IconName; label: string; className: string }) {
  return (
    <button aria-label={label} className={`flex h-10 items-center justify-center ${className}`}>
      <Icon name={name} className="size-4" />
    </button>
  );
}

function RangeField({ value, className }: { value: string; className: string }) {
  return (
    <button className={`flex h-10 items-center justify-between border-b border-[#8d8d8d] px-4 ${className}`}>
      {value}
      <Icon name="calendar" className="size-4" />
    </button>
  );
}

function LiveCard({
  title,
  sub,
  className,
  cal = "plain",
  popup = true,
  children,
}: {
  title: string;
  sub: string;
  className: string;
  cal?: "plain" | "raised" | "hover";
  popup?: boolean;
  children: React.ReactNode;
}) {
  const calStyle = { plain: "", raised: "shadow-[0_1px_5px_rgba(0,0,0,0.28)]", hover: "bg-[#e0e0e0]" }[cal];
  return (
    <section className={`bg-white ${className}`}>
      <div className="flex h-[60px] justify-between">
        <div className="pl-4 pt-[14px]">
          <h3 className="text-[14px] font-semibold leading-5 text-[#161616]">{title}</h3>
          <p className="text-[12px] leading-4 text-[#525252]">{sub}</p>
        </div>
        <div className="flex text-[#161616]">
          <button aria-label={`${title} time range`} className={`flex h-[47px] w-12 items-center justify-center ${calStyle}`}>
            <Icon name="calendar" className="size-4" />
          </button>
          {popup && (
            <button aria-label={`Expand ${title}`} className="flex h-[47px] w-12 items-center justify-center">
              <Icon name="popup" className="size-4" />
            </button>
          )}
        </div>
      </div>
      {children}
    </section>
  );
}

const GOLD_SLOTS = [11, 13, 14, 15, 16, 18, 19, 20, 22, 24, 25, 26, 28, 29, 33, 35, 36, 38, 39, 41, 42];

const ANOMALY: [number, number][] = [
  [0, 0.76], [2, 0.85], [3, 0.95], [4, 1], [5, 1.1], [7, 1.03], [8, 0.92], [9, 0.76], [11, 0.31], [13, 0.52], [14, 0.47],
  [15, 0.28], [17, 1.07], [18, 1.33], [20, 1.64], [22, 1.55], [24, 1.13], [25, 1.19], [27, 0.75], [28, 1.04], [30, 1.41], [31, 0.64],
];

const DAY_BARS: { name: string; color: string; bars: [number, number, number][] }[] = [
  { name: "Glass", color: C.teal, bars: [[69, 8, 0.45], [69, 4, 1], [92, 1, 0.4], [98, 1, 0.35], [315, 1, 0.2], [319, 1, 0.2]] },
  { name: "Lepidolite", color: C.red, bars: [[14, 1, 0.5], [62, 1, 0.9], [63, 3, 0.35], [69, 2, 0.95], [71, 4, 0.35], [92, 1, 0.25], [97, 1, 0.15]] },
  { name: "Calcite", color: C.purple, bars: [[62, 1, 1], [67, 2, 0.6], [70, 4, 1], [70, 6, 0.4], [92, 1, 0.3], [98, 1, 0.15], [314, 1, 0.3]] },
  { name: "Fluorite", color: C.blue, bars: [[62, 1, 0.35], [67, 1, 0.45], [70, 1, 0.5], [72, 1, 0.45], [315, 1, 0.25]] },
];

const fifths = (v: number) => String(Math.round(v * 10) / 10);
const halves = (v: number) => (v === 0.5 ? "0.500" : String(v));

function OverviewLive() {
  return (
    <LiveScreen
      kind="a"
      crumbs={["Monitor", "Device type: MVIE88A_Rocks"]}
      title="MVIE88A_Rocks: MVIE88A_Inspection003"
      tag="Device"
      tabs={["Alerts", "Metrics Dashboard", "Overview"]}
      updated="09/27/2023 08:26:39"
      tools={
        <>
          <a href="#connect" className="flex items-center gap-[10px] text-[#0f62fe]">
            View device in Connect <Icon name="launch" className="size-4" />
          </a>
          <ToolButton name="left" label="Previous range" className="ml-4 w-12" />
          <RangeField value="Last 7 days" className="mx-[14px] w-[321px]" />
          <ToolButton name="right" label="Next range" className="w-12" />
          <ToolButton name="pin" label="Pin" className="w-12" />
          <ToolButton name="settings" label="Settings" className="w-12" />
        </>
      }
    >
      <LiveCard title="Gold" sub="Last hour" cal="raised" className="col-span-2 h-[304px]">
        <Chart
          w={824}
          h={208}
          plot={[46, 9, 808, 156]}
          max={1.092}
          ticks={steps(0, 1, 0.2)}
          labelled={fifths}
          vlines={steps(95.5, 808, 62.45)}
          xLabels={[[220, "07:54", true], [408, "07:54", false], [595, "07:54", false], [783, "07:54", false]]}
          xLabelY={170}
          font={12}
          bars={GOLD_SLOTS.map((i) => ({ x: 95 + 12.5 * i, w: 9, v: 1, color: C.magenta }))}
        />
        <Legend size="lg" items={[["Gold", C.magenta]]} />
      </LiveCard>
      <LiveCard title="Gold Anomalies" sub="Last hour" cal="raised" className="col-span-2 h-[304px]">
        <Chart
          w={824}
          h={208}
          plot={[60, 9, 808, 140]}
          max={1.79}
          ticks={[0, 0.5, 1, 1.5]}
          labelled={halves}
          vlines={steps(84.1, 807, 24.13)}
          xLabels={[4, 9, 14, 19, 24, 29].map((i) => [60 + 24.13 * i, "07:54", i === 4] as [number, string, boolean])}
          xLabelY={154}
          titleY={188}
          font={12}
          stroke={1.5}
          r={3}
          series={[
            { color: C.purple, pts: ANOMALY.map(([i]) => [60 + 24.13 * i, i === 20 ? 0 : 1] as [number, number]) },
            { color: C.blue, pts: ANOMALY.map(([i, v]) => [60 + 24.13 * i, v] as [number, number]) },
          ]}
        />
        <Legend size="lg" items={[["Gold", C.purple], ["Gold_KMeans_Anomaly", C.blue]]} />
      </LiveCard>
      {DAY_BARS.map((d) => (
        <LiveCard key={d.name} title={d.name} sub="Last 24 hours" className="h-[304px]">
          <Chart
            w={404}
            h={208}
            plot={[46, 9, 388, 156]}
            max={1.092}
            ticks={steps(0, 1, 0.2)}
            labelled={fifths}
            vlines={steps(54.5, 387, 13.93)}
            xLabels={[[96, "12:00", true], [263, "00:00", true]]}
            xLabelY={170}
            font={12}
            bars={d.bars.map(([x, w, opacity]) => ({ x: 46 + x, w, v: 1, color: d.color, opacity }))}
          />
          <Legend size="lg" items={[[d.name, d.color]]} />
        </LiveCard>
      ))}
    </LiveScreen>
  );
}

const HOURLY_LIVE: {
  name: string;
  y: string;
  x0: number;
  max: number;
  ticks: number[];
  major: number;
  pts: [number, string][];
}[] = [
  { name: "fail", y: "Fail", x0: 58, max: 35, ticks: steps(0, 30, 5), major: 10, pts: [[32, C.green], [2, C.purple], [1, C.teal], [0, C.maroon]] },
  { name: "objectcount", y: "Objectcount", x0: 63, max: 344, ticks: steps(0, 300, 50), major: 100, pts: [[313, C.green], [0, C.maroon]] },
  { name: "pass", y: "Pass", x0: 63, max: 309, ticks: steps(0, 300, 50), major: 100, pts: [[281, C.green], [0, C.maroon]] },
  { name: "RoseQuartz", y: "Rosequartz", x0: 73, max: 2.2, ticks: [0, 0.5, 1, 1.5, 2], major: 0.5, pts: [[2, C.purple], [0, C.green]] },
];

function HourlyLiveChart({ index }: { index: number }) {
  const d = HOURLY_LIVE[index];
  const x = (d.x0 + 660) / 2;
  return (
    <LiveCard title={d.name} sub="Last 24 hours" className="col-span-2 h-[296px]">
      <Chart
        w={675}
        h={201}
        plot={[d.x0, 6, 660, 135]}
        max={d.max}
        ticks={d.ticks}
        labelled={(v) => (v % d.major === 0 ? halves(v) : null)}
        vlines={[x]}
        xLabels={[[x, "09:00", true]]}
        xLabelY={149}
        titleY={182}
        yTitle={d.y}
        font={12}
        stroke={1.5}
        r={3}
        series={d.pts.map(([v, color]) => ({ color, pts: [[x, v]] as [number, number][] }))}
      />
      <Legend size="lg" items={AGG} />
    </LiveCard>
  );
}

const HOURLY_VALUES: [string, string[]][] = [
  ["objectlabel", ["Lepidolite"]],
  ["result", ["pass"]],
  ["imageUrl", ["https://gtmgeo.v", "isualinspectio..."]],
  ["inspection", ["Inspection003"]],
  ["device", ["Rocks_Samples"]],
  ["mviversion", ["8.6.1"]],
  ["modeluuid", ["615feac1-83c0-", "4d8e-8e65-0c..."]],
  ["station", ["Rocks_Station"]],
];

function HourlyLive() {
  return (
    <LiveScreen
      kind="b"
      crumbs={["Monitor"]}
      title="Device type: MVIE88A_Rocks"
      tabs={["Alerts", "Hourly"]}
      updated="09/26/2023 12:05:50"
      tools={
        <>
          <div className="relative">
            <select aria-label="Time grain" className="h-10 w-[113px] appearance-none border-b border-[#8d8d8d] px-4">
              <option>Hourly</option>
            </select>
            <Icon name="down" className="pointer-events-none absolute right-4 top-3 size-4" />
          </div>
          <ToolButton name="left" label="Previous range" className="w-[46px]" />
          <RangeField value="Last 24 hours" className="mx-[15px] w-[312px]" />
          <ToolButton name="right" label="Next range" className="w-[47px]" />
          <ToolButton name="filter" label="Filter" className="mx-[15px] w-[47px]" />
          <ToolButton name="pin" label="Pin" className="w-[47px]" />
          <ToolButton name="settings" label="Settings" className="w-[47px]" />
        </>
      }
    >
      <HourlyLiveChart index={0} />
      <HourlyLiveChart index={1} />
      {HOURLY_VALUES.map(([name, lines], i) => (
        <LiveCard key={name} title={name} sub="Last 24 hours" popup={false} cal={i === 0 ? "hover" : "plain"} className="h-[139px]">
          <dl className="grid grid-cols-2 whitespace-nowrap px-4 text-[13px] leading-[18px] text-[#161616]">
            <div>
              <dt>{`Count ${name.toLowerCase()}`}</dt>
              <dd className="mt-[4px] text-[16px] font-light leading-[21px]">2</dd>
            </div>
            <div>
              <dt>{`Last ${name.toLowerCase()}`}</dt>
              {lines.map((l, k) => (
                <dd key={l} className={`text-[16px] font-light leading-[21px] ${k === 0 ? "mt-[4px]" : ""}`}>{l}</dd>
              ))}
            </div>
          </dl>
        </LiveCard>
      ))}
      <HourlyLiveChart index={2} />
      <HourlyLiveChart index={3} />
    </LiveScreen>
  );
}

/* ------------------------------------------------------------------ */
/* Summary dashboard wizard                                            */
/* ------------------------------------------------------------------ */

function StepDot({ state, n, className }: { state: "current" | "todo" | "done"; n: number; className: string }) {
  return (
    <svg viewBox="0 0 20 20" className={`shrink-0 ${className}`} aria-label={`Step ${n}`}>
      {state === "current" && (
        <>
          <circle cx="10" cy="10" r="9" fill="#fff" stroke="#0f62fe" strokeWidth="1.6" />
          <circle cx="10" cy="10" r="7" fill="#0f62fe" />
        </>
      )}
      {state === "todo" && <circle cx="10" cy="10" r="9" fill="none" stroke="#161616" strokeWidth="1.4" />}
      {state === "done" ? (
        <>
          <circle cx="10" cy="10" r="9" fill="none" stroke="#0f62fe" strokeWidth="1.6" />
          <path d="M6 10.2L9 13L14 7.4" fill="none" stroke="#0f62fe" strokeWidth="1.6" />
        </>
      ) : (
        <text x="10" y="14" textAnchor="middle" fontSize="11" fill={state === "current" ? "#fff" : "#161616"}>{n}</text>
      )}
    </svg>
  );
}

function WizardDefinition() {
  return (
    <Shell size="large" tools={false}>
      <main className="min-w-0 flex-1 pl-[27px] text-[12px] text-[#161616]">
        <Crumbs items={["Monitor", "Device type: MVIE88A_Rocks"]} className="mt-[17px] h-5 text-[12px]" />
        <h2 className="flex h-8 items-center whitespace-nowrap text-[22px]">Create a summary dashboard</h2>
        <ol className="mt-[23px] flex">
          <li className="w-[108px]">
            <div className="flex h-5 items-center pl-[1px]">
              <StepDot state="current" n={1} className="size-[18px]" />
              <span className="h-px flex-1 bg-[#c6c6c6]" />
            </div>
            <p className="mt-[6px] pl-[2px] leading-4">Definition</p>
          </li>
          <li>
            <div className="flex h-5 items-center pl-[1px]"><StepDot state="todo" n={2} className="size-[18px]" /></div>
            <p className="mt-[6px] pl-[2px] leading-4">Contents</p>
          </li>
        </ol>
        <h3 className="mt-7 font-semibold leading-5">Step 1: Define how to summarize your data</h3>
        <p className="mt-1 leading-5">Select a time grain to apply, for example, show metrics at a daily level.</p>
        <label htmlFor="sum-name" className="mt-[8px] block text-[10px] leading-4 text-[#525252]">Summary dashboard name</label>
        <input id="sum-name" defaultValue="Hourly" className="mt-[7px] block h-[34px] w-[572px] border-b border-[#e0e0e0] bg-white px-[14px]" />
        <label htmlFor="grain" className="mt-[11px] block w-fit border-b border-dotted border-[#525252] leading-[18px]">Time grain</label>
        <div className="relative mt-[9px] w-[558px]">
          <select id="grain" className="block h-[34px] w-full appearance-none border-b border-[#8d8d8d] bg-white px-[14px]">
            <option>Hourly</option>
          </select>
          <Icon name="down" className="pointer-events-none absolute right-[14px] top-[10px] size-[14px]" />
        </div>
        <p className="mt-[12px] w-fit border-b border-dotted border-[#525252] leading-[18px]">Show these options as filters (optional):</p>
        <table className="mt-[2px] w-[572px] table-fixed bg-white text-left text-[#525252]">
          <colgroup>
            <col className="w-[44px]" />
            <col />
          </colgroup>
          <thead>
            <tr className="h-[40px] bg-[#c6c6c6] text-[#161616]">
              <th className="bg-[#e0e0e0] pl-[16px]">
                <Tick label="Select all" className="size-[14px] rounded-[2px] outline outline-2 outline-offset-1 outline-[#0f62fe]" />
              </th>
              <th className="pl-[14px] font-semibold">Dimension</th>
            </tr>
          </thead>
          <tbody>
            {["description", "descriptiveLocation", "inspectionName", "manufacturer", "model"].map((d) => (
              <tr key={d} className="h-[41px] border-b border-[#e0e0e0]">
                <td className="pl-[16px]"><Tick label={d} className="size-[14px]" /></td>
                <td className="pl-[14px]">{d}</td>
              </tr>
            ))}
          </tbody>
        </table>
      </main>
    </Shell>
  );
}

const ITEMS = {
  m: {
    cols: ["w-[31px]", "w-[28px]", "w-[266px]", "w-[126px]", "w-[248px]"],
    row: "h-[31px]",
    text: "text-[9px]",
    tick: "size-[11px]",
    chevron: "size-[10px]",
    pick: "h-[26px] w-[91px] gap-[5px] pl-[6px] pr-[9px]",
    pill: "h-4 w-[27px] gap-[3px] rounded-full",
    pillIcon: "size-[7px]",
    icon: "size-[10px]",
    kind: "gap-[7px]",
  },
  s: {
    cols: ["w-[29px]", "w-[22px]", "w-[237px]", "w-[113px]", "w-[219px]"],
    row: "h-[28px]",
    text: "text-[8px]",
    tick: "size-[10px]",
    chevron: "size-[9px]",
    pick: "h-[23px] w-[80px] gap-[5px] pl-[4px] pr-[7px]",
    pill: "h-[14px] w-6 gap-[3px] rounded-full",
    pillIcon: "size-[6px]",
    icon: "size-[10px]",
    kind: "gap-[10px]",
  },
};

type Row = { name: string; type?: "String" | "Number"; group?: boolean };

const str = (name: string): Row => ({ name, type: "String" });
const num = (name: string): Row => ({ name, type: "Number" });

function ItemPicker({ row, size, open = false }: { row: Row; size: keyof typeof ITEMS; open?: boolean }) {
  const s = ITEMS[size];
  return (
    <button
      aria-haspopup="listbox"
      aria-label={`${row.name} aggregations`}
      className={`flex items-center bg-[#f4f4f4] ${s.pick}`}
    >
      <span className={`flex items-center justify-center bg-[#393939] text-white ${s.pill}`}>
        {row.type === "Number" ? 7 : 2}
        <Icon name="close" className={s.pillIcon} />
      </span>
      <span className="flex-1 text-left">Select</span>
      <Icon name={open ? "up" : "down"} className={s.chevron} />
    </button>
  );
}

function ItemsTable({
  size,
  rows,
  className,
  header = false,
  openRow,
}: {
  size: keyof typeof ITEMS;
  rows: Row[];
  className: string;
  header?: boolean;
  openRow?: string;
}) {
  const s = ITEMS[size];
  return (
    <table className={`table-fixed bg-[#e0e0e0] text-left text-[#393939] ${s.text} ${className}`}>
      <colgroup>
        {s.cols.map((c, i) => (
          <col key={i} className={c} />
        ))}
        <col />
      </colgroup>
      <tbody>
        {header && (
          <tr className={`border-b border-[#c6c6c6] text-[#161616] ${s.row}`}>
            <th />
            <th className="text-center"><Tick mixed label="Select all" className={s.tick} /></th>
            <th className="pl-[13px] font-semibold">Data item</th>
            <th className="pl-[13px] font-semibold">Type</th>
            <th />
            <th />
          </tr>
        )}
        {rows.map((r) => {
          const open = r.name === openRow;
          return (
            <tr key={r.name} className={`border-b border-[#c6c6c6] ${s.row} ${open ? "bg-[#c6c6c6]" : ""}`}>
              <td>{r.group && <Icon name="up" className={`mx-auto ${s.chevron}`} />}</td>
              <td className="text-center"><Tick label={r.name} className={s.tick} /></td>
              <td className="pl-[13px]">{r.name}</td>
              <td className="pl-[13px]">{r.type}</td>
              <td className="pl-[13px] pt-[3px]">
                {!r.group && (
                  <div className="relative">
                    <ItemPicker row={r} size={size} open={open} />
                    {open && (
                      <ul className="absolute left-0 top-full z-10 grid h-[213px] w-[91px] auto-rows-fr border border-[#4589ff] bg-[#e0e0e0]">
                        {["count", "first", "last", "max", "mean", "min", "std", "sum"].map((a) => (
                          <li
                            key={a}
                            className={`flex items-center gap-[6px] pl-[7px] ${
                              a === "first" ? "bg-[#f4f4f4] text-[#8d8d8d]" : ""
                            }`}
                          >
                            <Tick label={a} checked={a !== "first"} className={s.tick} />
                            {a}
                          </li>
                        ))}
                      </ul>
                    )}
                  </div>
                )}
              </td>
              <td className="pl-[13px]">
                {r.group ? (
                  "-"
                ) : (
                  <span className={`flex items-center ${s.kind}`}>
                    <Icon name={r.type === "Number" ? "line" : "value"} className={s.icon} />
                    {r.type === "Number" ? "Time series line" : "Value"}
                  </span>
                )}
              </td>
            </tr>
          );
        })}
      </tbody>
    </table>
  );
}

const METRICS: Row[] = [
  { name: "Metric", group: true },
  str("device"),
  num("fail"),
  str("imageUrl"),
  str("inspection"),
  str("modeluuid"),
  str("mviversion"),
  num("objectcount"),
  str("objectlabel"),
  num("pass"),
  str("result"),
  str("station"),
];

const SCROLLED: Row[] = [
  ...METRICS.slice(3),
  { name: "Metric (calculated)", group: true },
  ...["Calcite", "Fluorite", "Glass", "Gold", "Gold_KMeans_Anomaly", "Lepidolite", "MilkyQuartz", "Obsidian", "RedJasper", "RoseQuartz"].map(num),
];

function WizardContents() {
  return (
    <Shell size="medium" tools={false}>
      <main className="min-w-0 flex-1 pl-[21px] text-[9px] text-[#161616]">
        <Crumbs items={["Monitor", "Device type: MVIE88A_Rocks"]} className="mt-[14px] h-[14px] text-[9px]" />
        <h2 className="flex h-[26px] items-center whitespace-nowrap text-[18px]">Create a summary dashboard</h2>
        <ol className="mt-[19px] flex">
          <li className="w-[85px]">
            <div className="flex h-[14px] items-center">
              <StepDot state="done" n={1} className="size-[14px]" />
              <span className="h-[2px] flex-1 bg-[#0f62fe]" />
            </div>
            <p className="mt-[5px] leading-[14px]">Definition</p>
          </li>
          <li>
            <div className="flex h-[14px] items-center"><StepDot state="current" n={2} className="size-[14px]" /></div>
            <p className="mt-[5px] leading-[14px]">Contents</p>
          </li>
        </ol>
        <h3 className="mt-[20px] font-semibold leading-4">Step 2: Choose the contents of the dashboard</h3>
        <p className="mt-[4px] whitespace-nowrap leading-[13px]">
          Choose the data items to include in the dashboard. You can apply an aggregation to each data item.
          <br />
          Depending on your selection, a default card type is applied. You can refine your selection or build
          <br />
          the contents from scratch in the next step.
        </p>
        <p className="mt-[8px] w-fit border-b border-dotted border-[#525252] leading-[14px]">Available data items</p>
        <ItemsTable size="m" header rows={METRICS} openRow="fail" className="mt-[10px] h-[413px] w-[939px]" />
      </main>
    </Shell>
  );
}

function WizardScrolled() {
  return (
    <Shell size="compact">
      <main className="flex min-w-0 flex-1 flex-col text-[8px] text-[#393939]">
        <div className="px-[19px] pr-[35px]">
          <div className="flex h-[7px] items-start border-b border-[#c6c6c6] bg-[#e0e0e0] pl-[414px]">
            <span className="flex h-[5px] w-[80px] bg-[#f4f4f4] pl-[6px]">
              <span className="h-[2px] w-5 rounded-b-full bg-[#393939]" />
            </span>
          </div>
          <ItemsTable size="s" rows={SCROLLED} className="h-[568px] w-full" />
          <div className="flex h-7 items-center bg-white">
            <label className="flex h-full items-center gap-2 border-r border-[#e0e0e0] pl-[9px] pr-2">
              Items per page:
              <span className="relative flex items-center">
                <select className="w-[22px] appearance-none">
                  <option>10</option>
                </select>
                <Icon name="down" className="pointer-events-none absolute right-0 size-[8px]" />
              </span>
            </label>
            <span className="pl-[10px] text-[#525252]">1–2 of 2 items</span>
          </div>
        </div>
        <div className="mt-auto flex h-[45px] items-start gap-[9px] bg-white pl-[19px] pt-[10px] text-white">
          <button className="h-7 w-[66px] bg-[#393939] pl-[10px] text-left">Back</button>
          <button className="h-7 w-[126px] bg-[#0f62fe] pl-[9px] text-left">Configure dashboard</button>
        </div>
      </main>
    </Shell>
  );
}

/* ------------------------------------------------------------------ */
/* Data item setup                                                     */
/* ------------------------------------------------------------------ */

const SETUP_ITEMS = [
  "Calcite",
  ...["count", "last", "max", "mean", "min", "std", "sum"].map((a) => `Calcite_Hourly_${a}`),
  "device_Hourly_count",
  "device_Hourly_last",
  ...["count", "last", "max", "mean", "min", "std", "sum"].map((a) => `fail_Hourly_${a}`),
  "Fluorite",
  "Fluorite_Hourly_count",
];

function SetupScreen() {
  return (
    <Shell size="medium" tools={false} active={3}>
      <main className="flex min-w-0 flex-1 flex-col text-[9px] text-[#161616]">
        <div className="h-[101px] shrink-0 bg-white">
          <Crumbs items={["Setup"]} className="ml-[21px] mt-[12px] h-[14px]" />
          <h2 className="ml-[21px] flex h-[28px] items-center whitespace-nowrap text-[18px]">
            MVIE88A_Rocks
            <span className="ml-[4px] flex h-[15px] items-center rounded-full bg-[#e0e0e0] px-[5px] text-[8px] text-[#393939]">Device type</span>
            <Icon name="info" className="ml-[11px] size-[10px]" />
          </h2>
          <div role="tablist" className="ml-[10px] mt-[16px] flex h-[31px] text-[#525252]">
            <button role="tab" aria-selected="true" className="w-[104px] shrink-0 border-t-2 border-[#0f62fe] bg-[#f4f4f4] pl-[11px] text-left font-semibold text-[#161616]">Data</button>
            <button role="tab" aria-selected="false" className="w-[104px] shrink-0 border-r border-[#8d8d8d] bg-[#e0e0e0] pl-[11px] text-left">Identity</button>
            <button role="tab" aria-selected="false" className="w-[104px] shrink-0 bg-[#e0e0e0] pl-[11px] text-left">Dashboards</button>
          </div>
        </div>
        <section className="ml-[10px] mt-[21px] min-h-0 flex-1 overflow-hidden bg-white">
          <h3 className="flex h-9 items-center border-b border-[#e0e0e0] pl-[11px] text-[10px] font-semibold">Data items</h3>
          <label className="flex h-[26px] items-center gap-[12px] border-b border-[#e0e0e0] pl-[11px] text-[#525252]">
            <Icon name="search" className="size-[9px]" />
            <input aria-label="Search data items" placeholder="Search data items" className="w-full placeholder:text-[#8d8d8d]" />
          </label>
          {["Metric", "Dimension"].map((g) => (
            <div key={g} className="flex h-[26px] items-center gap-[12px] border-b border-[#e0e0e0] pl-[11px] font-semibold">
              <button aria-label={`Expand ${g}`}><Icon name="down" className="size-[9px]" /></button>
              {g}
            </div>
          ))}
          <div className="flex h-[26px] items-center whitespace-nowrap border-b border-[#e0e0e0] pl-[9px] font-semibold">
            <button aria-label="Collapse batch data metric" className="mr-[9px] flex size-[13px] items-center justify-center border border-[#0f62fe]">
              <Icon name="up" className="size-[8px]" />
            </button>
            Batch data metric (calcula...
            <button className="ml-auto mr-[17px] flex items-center gap-[6px] font-normal text-[#0f62fe]">
              Create metric <Icon name="add" className="size-[10px]" />
            </button>
          </div>
          <ul>
            {SETUP_ITEMS.map((name) => (
              <li key={name} className="flex h-[26px] items-center justify-between border-b border-[#e0e0e0] pl-[52px] pr-[14px] text-[#525252]">
                {name}
                <span className="flex h-4 items-center rounded-full bg-[#e0e0e0] px-[5px] text-[8px] text-[#393939]">
                  {name.includes("_") ? "Aggregator" : "Transformer"}
                </span>
              </li>
            ))}
          </ul>
        </section>
      </main>
    </Shell>
  );
}

/* ------------------------------------------------------------------ */
/* Board                                                               */
/* ------------------------------------------------------------------ */

const BOARD = { w: 4096, h: 2308 };

const WINDOWS: { id: string; x: number; y: number; w: number; h: number; fade?: boolean; view: () => React.JSX.Element }[] = [
  { id: "create", x: 119, y: 52, w: 588, h: 527, view: CreateDialog },
  { id: "overview-editor", x: 993, y: 52, w: 959, h: 630, view: OverviewEditor },
  { id: "overview-live", x: 2101, y: 52, w: 1827, h: 930, view: OverviewLive },
  { id: "wizard-1", x: 87, y: 1096, w: 675, h: 668, view: WizardDefinition },
  { id: "wizard-2", x: 335, y: 1502, w: 1038, h: 662, view: WizardContents },
  { id: "wizard-3", x: 829, y: 1096, w: 927, h: 709, view: WizardScrolled },
  { id: "hourly-editor", x: 1206, y: 1508, w: 765, h: 588, view: HourlyEditor },
  { id: "hourly-live", x: 2101, y: 1096, w: 1517, h: 1160, fade: true, view: HourlyLive },
  { id: "setup", x: 3660, y: 1096, w: 309, h: 778, fade: true, view: SetupScreen },
];

const pct = (v: number, of: number) => `${(v / of) * 100}%`;

export default function App() {
  return (
    <div className="relative h-screen w-full overflow-hidden border-r-4 border-t-4 border-[#e0e0e0] bg-[#f4f4f4] font-['Noto_Sans',sans-serif] text-[#161616]">
      <div className="absolute left-0 top-0 -mt-1 h-screen w-screen">
        {WINDOWS.map(({ id, x, y, w, h, fade, view: View }) => (
          <div
            key={id}
            className="absolute overflow-hidden border-[3px] border-[#4472c4] bg-white"
            style={{ left: pct(x, BOARD.w), top: pct(y, BOARD.h), width: pct(w, BOARD.w), height: pct(h, BOARD.h) }}
          >
            <View />
            {fade && (
              <div className="pointer-events-none absolute inset-x-0 bottom-0 h-9 bg-gradient-to-b from-transparent to-black/5" />
            )}
          </div>
        ))}
      </div>
    </div>
  );
}
